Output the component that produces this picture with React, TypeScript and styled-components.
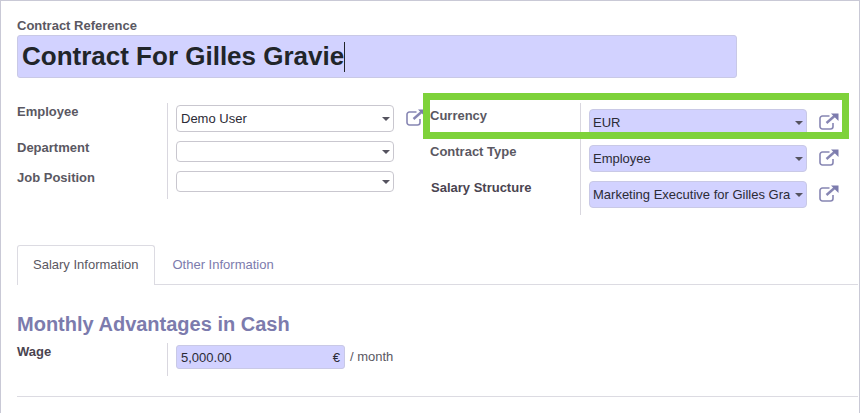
import styled, { createGlobalStyle } from "styled-components";

const GlobalStyle = createGlobalStyle`
  html, body {
    margin: 0;
    padding: 0;
    background: #fff;
    font-family: "Liberation Sans", Arial, sans-serif;
  }
`;

const Sheet = styled.div`
  position: relative;
  box-sizing: border-box;
  width: 860px;
  height: 413px;
  overflow: hidden;
  padding: 17px 1px 0 16px;
  border-top: 1px solid #c9c9d6;
  border-left: 1px solid #c9c9d6;
  border-right: 1px solid #c9c9d6;
`;

const FieldLabel = styled.div<{ $dark?: boolean }>`
  font-size: 13px;
  line-height: 15px;
  font-weight: 700;
  color: ${(p) => (p.$dark ? "#4a4450" : "#5a5862")};
`;

const TitleInput = styled.div`
  box-sizing: border-box;
  width: 720px;
  height: 43px;
  margin-top: 2px;
  padding-left: 4px;
  background: #d2d2ff;
  border: 1px solid #c9c9e6;
  border-radius: 3px;
  font-size: 26px;
  line-height: 41px;
  font-weight: 700;
  color: #212529;
  display: flex;
  align-items: center;
`;

const Caret = styled.span`
  width: 1px;
  height: 30px;
  background: #212529;
`;

const Columns = styled.div`
  display: flex;
  margin-top: 25px;
  height: 112px;
`;

const Group = styled.div<{ $width: number }>`
  width: ${(p) => p.$width}px;
  display: grid;
  grid-template-columns: 150px 1fr;
  align-items: start;
`;

const Labels = styled.div<{ $top: number }>`
  display: flex;
  flex-direction: column;
  padding-top: ${(p) => p.$top}px;
`;

const LabelRow = styled.div<{ $height: number; $indent?: number }>`
  height: ${(p) => p.$height}px;
  padding-left: ${(p) => p.$indent ?? 0}px;
`;

const Controls = styled.div<{ $height: number; $top: number }>`
  box-sizing: border-box;
  height: ${(p) => p.$height}px;
  border-left: 1px solid #d9d7df;
  padding: ${(p) => p.$top}px 0 0 8px;
  display: flex;
  flex-direction: column;
  gap: 9px;
`;

const SelectRow = styled.div`
  display: flex;
  align-items: center;
`;

const Select = styled.div<{ $filled?: boolean; $height: number }>`
  position: relative;
  box-sizing: border-box;
  width: 218px;
  height: ${(p) => p.$height}px;
  padding-left: ${(p) => (p.$filled ? "3px" : "4px")};
  background: ${(p) => (p.$filled ? "#d2d2ff" : "#fff")};
  border: 1px solid ${(p) => (p.$filled ? "#c9c9e6" : "#c9c7cf")};
  border-radius: 4px;
  font-size: 13px;
  color: #2b2b36;
  display: flex;
  align-items: center;
  white-space: nowrap;
  overflow: hidden;
`;

const Arrow = styled.span`
  position: absolute;
  right: 3px;
  top: 50%;
  margin-top: -2px;
  width: 0;
  height: 0;
  border-left: 4px solid transparent;
  border-right: 4px solid transparent;
  border-top: 4px solid #55535f;
`;

const IconWrap = styled.span`
  display: flex;
  margin: 0 0 2px 12px;
`;

const Tabs = styled.div`
  display: flex;
  height: 39px;
  margin-top: 30px;
  border-bottom: 1px solid #dcdbe2;
`;

const Tab = styled.div<{ $active?: boolean }>`
  box-sizing: border-box;
  height: ${(p) => (p.$active ? "40px" : "39px")};
  padding: 0 ${(p) => (p.$active ? "15px" : "18px")};
  font-size: 13px;
  line-height: ${(p) => (p.$active ? "38px" : "39px")};
  white-space: nowrap;
  color: ${(p) => (p.$active ? "#5a5862" : "#7c7bad")};
  background: ${(p) => (p.$active ? "#fff" : "transparent")};
  border: ${(p) => (p.$active ? "1px solid #dcdbe2" : "none")};
  border-bottom: none;
  border-radius: 3px 3px 0 0;
`;

const SectionTitle = styled.h2`
  margin: 28px 0 0;
  font-size: 20px;
  line-height: 22px;
  font-weight: 700;
  color: #7c7bad;
`;

const WageRow = styled.div`
  display: grid;
  grid-template-columns: 150px 1fr;
  margin-top: 8px;
  height: 33px;
`;

const WageLabel = styled(FieldLabel)`
  padding-top: 1px;
`;

const WageControls = styled.div`
  border-left: 1px solid #d9d7df;
  padding: 2px 0 0 8px;
  display: flex;
  align-items: flex-start;
`;

const AmountInput = styled.div`
  box-sizing: border-box;
  width: 169px;
  height: 24px;
  padding: 0 4px;
  background: #d2d2ff;
  border: 1px solid #c9c9e6;
  border-radius: 3px;
  font-size: 13px;
  color: #2b2b36;
  display: flex;
  align-items: center;
  justify-content: space-between;
`;

const Suffix = styled.span`
  margin-left: 5px;
  font-size: 13px;
  line-height: 24px;
  color: #5a5862;
`;

const Rule = styled.div`
  height: 1px;
  margin-top: 20px;
  background: #dcdbe2;
`;

const Highlight = styled.div`
  position: absolute;
  left: 422px;
  top: 92px;
  width: 426px;
  height: 46px;
  box-sizing: border-box;
  border: 7px solid #7ed23a;
  pointer-events: none;
`;

function ExternalIcon() {
  return (
    <svg width="20" height="17" viewBox="0 0 20 17" fill="none" stroke="#8786b3">
      <path
        d="M10.500 3H3.500A2.500 2.500 0 0 0 1 5.500V13.500A2.500 2.500 0 0 0 3.500 16H11.500A2.500 2.500 0 0 0 14 13.500V10"
        strokeWidth="1.600"
      />
      <path d="M7.500 10L15.500 3" strokeWidth="2.400" />
      <path d="M12 0.500H19.500V8Z" fill="#7c7bad" stroke="none" />
    </svg>
  );
}

function Dropdown(props: {
  value?: string;
  filled?: boolean;
  height: number;
  link?: boolean;
}) {
  return (
    <SelectRow>
      <Select $filled={props.filled} $height={props.height}>
        {props.value}
        <Arrow />
      </Select>
      {props.link ? (
        <IconWrap>
          <ExternalIcon />
        </IconWrap>
      ) : null}
    </SelectRow>
  );
}

export default function App() {
  return (
    <>
      <GlobalStyle />
      <Sheet>
        <FieldLabel>Contract Reference</FieldLabel>
        <TitleInput>
          Contract For Gilles Gravie
          <Caret />
        </TitleInput>

        <Columns>
          <Group $width={413}>
            <Labels $top={1}>
              <LabelRow $height={36}>
                <FieldLabel>Employee</FieldLabel>
              </LabelRow>
              <LabelRow $height={30}>
                <FieldLabel>Department</FieldLabel>
              </LabelRow>
              <LabelRow $height={30}>
                <FieldLabel>Job Position</FieldLabel>
              </LabelRow>
            </Labels>
            <Controls $height={96} $top={2}>
              <Dropdown value="Demo User" height={27} link />
              <Dropdown height={21} />
              <Dropdown height={21} />
            </Controls>
          </Group>
          <Group $width={427}>
            <Labels $top={5}>
              <LabelRow $height={36}>
                <FieldLabel>Currency</FieldLabel>
              </LabelRow>
              <LabelRow $height={36}>
                <FieldLabel>Contract Type</FieldLabel>
              </LabelRow>
              <LabelRow $height={36} $indent={1}>
                <FieldLabel $dark>Salary Structure</FieldLabel>
              </LabelRow>
            </Labels>
            <Controls $height={112} $top={6}>
              <Dropdown value="EUR" filled height={27} link />
              <Dropdown value="Employee" filled height={27} link />
              <Dropdown value="Marketing Executive for Gilles Gra" filled height={27} link />
            </Controls>
          </Group>
        </Columns>

        <Tabs>
          <Tab $active>Salary Information</Tab>
          <Tab>Other Information</Tab>
        </Tabs>

        <SectionTitle>Monthly Advantages in Cash</SectionTitle>
        <WageRow>
          <WageLabel $dark>Wage</WageLabel>
          <WageControls>
            <AmountInput>
              <span>5,000.00</span>
              <span>€</span>
            </AmountInput>
            <Suffix>/ month</Suffix>
          </WageControls>
        </WageRow>
        <Rule />

        <Highlight />
      </Sheet>
    </>
  );
}
